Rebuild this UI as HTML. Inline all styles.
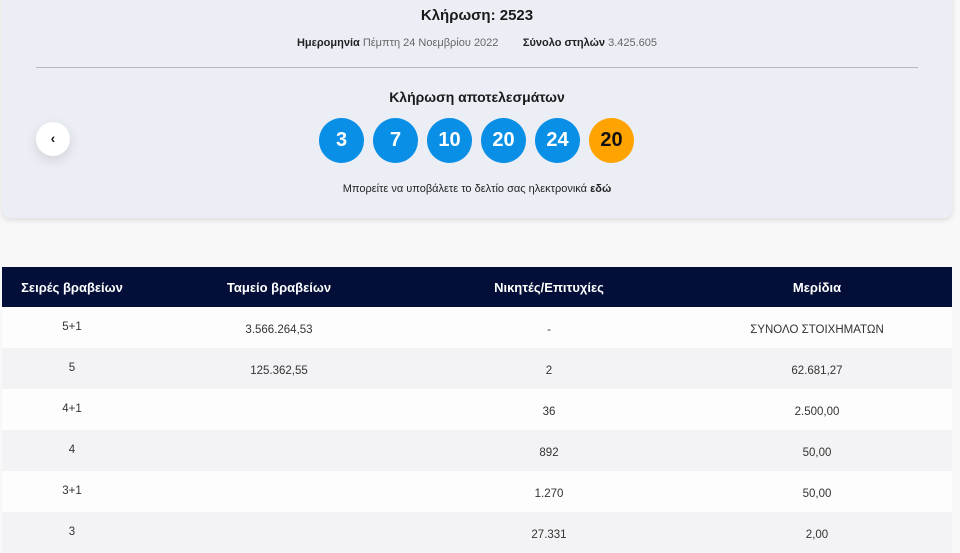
<!DOCTYPE html>
<html><head><meta charset="utf-8"><style>
*{margin:0;padding:0;box-sizing:border-box}
body{width:960px;height:535px;overflow:hidden;background:#f8f8f9;font-family:"Liberation Sans",sans-serif;color:#1a1a1a;position:relative}
.card{position:absolute;left:2px;top:-10px;width:950px;height:228px;background:#eceef5;border-radius:0 0 8px 8px;box-shadow:0 2px 6px rgba(0,0,0,.12)}
.t{position:absolute;width:100%;text-align:center}
.ball{position:absolute;top:118px;width:45px;height:45px;border-radius:50%;background:#0a8fe6;color:#fff;font-weight:bold;font-size:20px;text-align:center;line-height:45px}
.back{position:absolute;left:36px;top:122px;width:34px;height:34px;border-radius:50%;background:#fff;box-shadow:0 4px 12px rgba(0,0,0,.12);text-align:center;line-height:33px;font-size:14px;font-weight:bold}
table{position:absolute;left:2px;top:267px;width:950px;border-collapse:collapse;font-size:11.5px}
th{background:#030f38;color:#fff;height:40px;font-size:13px;font-weight:bold;text-align:center}
td{height:41px;text-align:center;color:#333;vertical-align:middle;padding-top:4px}
td.f{vertical-align:top;padding-top:14px}
tr:nth-child(even) td{background:#fdfdfd}
tr:nth-child(odd) td{background:#f3f3f5}
</style></head><body>
<div class="card">
<div class="t" style="top:17px;font-size:15px;font-weight:bold">Κλήρωση: 2523</div>
<div class="t" style="top:47px;font-size:11px;color:#666"><b style="color:#222">Ημερομηνία</b> Πέμπτη 24 Νοεμβρίου 2022 &nbsp;&nbsp;&nbsp;&nbsp;&nbsp;&nbsp; <b style="color:#222">Σύνολο στηλών</b> 3.425.605</div>
<div style="position:absolute;left:34px;top:77px;width:882px;height:1px;background:#b8b9bd"></div>
<div class="t" style="top:99px;font-size:14px;font-weight:bold">Κλήρωση αποτελεσμάτων</div>
<div class="t" style="top:193px;font-size:11px;color:#222">Μπορείτε να υποβάλετε το δελτίο σας ηλεκτρονικά <b>εδώ</b></div>
</div>
<div class="back">‹</div>
<div class="ball" style="left:319px">3</div>
<div class="ball" style="left:373px">7</div>
<div class="ball" style="left:427px">10</div>
<div class="ball" style="left:481px">20</div>
<div class="ball" style="left:535px">24</div>
<div class="ball" style="left:589px;background:#ffa300;color:#111">20</div>
<table>
<tr><th style="width:140px">Σειρές βραβείων</th><th style="width:274px">Ταμείο βραβείων</th><th style="width:266px">Νικητές/Επιτυχίες</th><th>Μερίδια</th></tr>
<tr><td class="f">5+1</td><td>3.566.264,53</td><td>-</td><td>ΣΥΝΟΛΟ ΣΤΟΙΧΗΜΑΤΩΝ</td></tr>
<tr><td class="f">5</td><td>125.362,55</td><td>2</td><td>62.681,27</td></tr>
<tr><td class="f">4+1</td><td></td><td>36</td><td>2.500,00</td></tr>
<tr><td class="f">4</td><td></td><td>892</td><td>50,00</td></tr>
<tr><td class="f">3+1</td><td></td><td>1.270</td><td>50,00</td></tr>
<tr><td class="f">3</td><td></td><td>27.331</td><td>2,00</td></tr>
</table>
</body></html>
